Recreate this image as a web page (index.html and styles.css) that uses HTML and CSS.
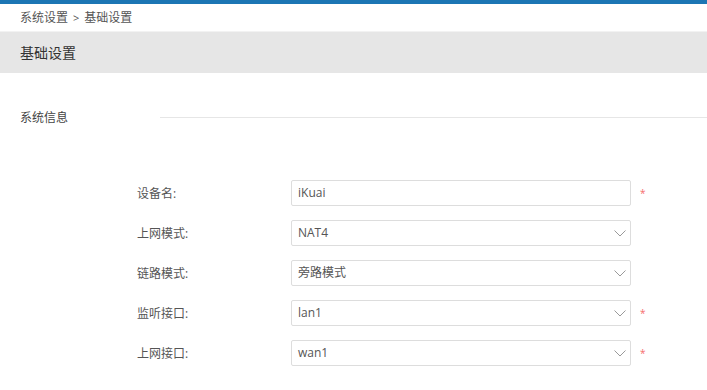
FILE: index.html
```html
<!DOCTYPE html>
<html lang="zh-CN">
<head>
    <meta charset="UTF-8">
    <title>基础设置</title>
    <link rel="stylesheet" href="styles.css">
</head>
<body>
    <div class="crumb">系统设置<span class="crumb-sep">&gt;</span>基础设置</div>
    <div class="page-title">基础设置</div>

    <div class="section">
        <div class="section-name">系统信息</div>
        <div class="section-line"></div>
    </div>

    <div class="form">
        <div class="form-row">
            <label class="form-label">设备名:</label>
            <div class="field">iKuai</div>
            <span class="req">*</span>
        </div>
        <div class="form-row">
            <label class="form-label">上网模式:</label>
            <div class="field select">NAT4
                <svg class="arrow" width="12" height="7" viewBox="0 0 12 7"><path d="M0.5 0.5 L6 6 L11.5 0.5" fill="none" stroke="#999" stroke-width="1"/></svg>
            </div>
        </div>
        <div class="form-row">
            <label class="form-label">链路模式:</label>
            <div class="field select">旁路模式
                <svg class="arrow" width="12" height="7" viewBox="0 0 12 7"><path d="M0.5 0.5 L6 6 L11.5 0.5" fill="none" stroke="#999" stroke-width="1"/></svg>
            </div>
        </div>
        <div class="form-row">
            <label class="form-label">监听接口:</label>
            <div class="field select">lan1
                <svg class="arrow" width="12" height="7" viewBox="0 0 12 7"><path d="M0.5 0.5 L6 6 L11.5 0.5" fill="none" stroke="#999" stroke-width="1"/></svg>
            </div>
            <span class="req">*</span>
        </div>
        <div class="form-row">
            <label class="form-label">上网接口:</label>
            <div class="field select">wan1
                <svg class="arrow" width="12" height="7" viewBox="0 0 12 7"><path d="M0.5 0.5 L6 6 L11.5 0.5" fill="none" stroke="#999" stroke-width="1"/></svg>
            </div>
            <span class="req">*</span>
        </div>
    </div>
</body>
</html>
```

FILE: styles.css
```css
body {
    margin: 0;
    font-family: "Open Sans", "Noto Sans CJK SC", sans-serif;
    font-size: 12px;
    color: #555;
    background-color: #fff;
    border-top: 4px solid #1c76b4;
    overflow: hidden;
}
.crumb {
    height: 27px;
    line-height: 27px;
    padding-left: 20px;
    color: #555;
}
.crumb-sep {
    margin: 0 5px;
    font-size: 11px;
}
.page-title {
    height: 41px;
    line-height: 41px;
    border-top: 1px solid #f2f2f2;
    background-color: #e6e6e6;
    padding-left: 20px;
    font-size: 14px;
    color: #333;
}
.section {
    display: flex;
    align-items: center;
    margin-top: 34px;
    height: 20px;
}
.section-name {
    width: 160px;
    padding-left: 20px;
    box-sizing: border-box;
    color: #444;
}
.section-line {
    flex: 1;
    border-top: 1px solid #e6e6e6;
}
.form {
    margin-top: 53px;
}
.form-row {
    display: flex;
    align-items: center;
    height: 26px;
    margin-bottom: 14px;
}
.form-label {
    width: 154px;
    padding-left: 137px;
    color: #555;
}
.field {
    position: relative;
    width: 340px;
    height: 26px;
    line-height: 24px;
    box-sizing: border-box;
    border: 1px solid #ddd;
    border-radius: 2px;
    padding-left: 6px;
    color: #555;
}
.arrow {
    position: absolute;
    right: 4px;
    top: 9px;
}
.req {
    margin-left: 9px;
    color: #f56c6c;
    font-size: 10px;
    line-height: 1;
}
```
